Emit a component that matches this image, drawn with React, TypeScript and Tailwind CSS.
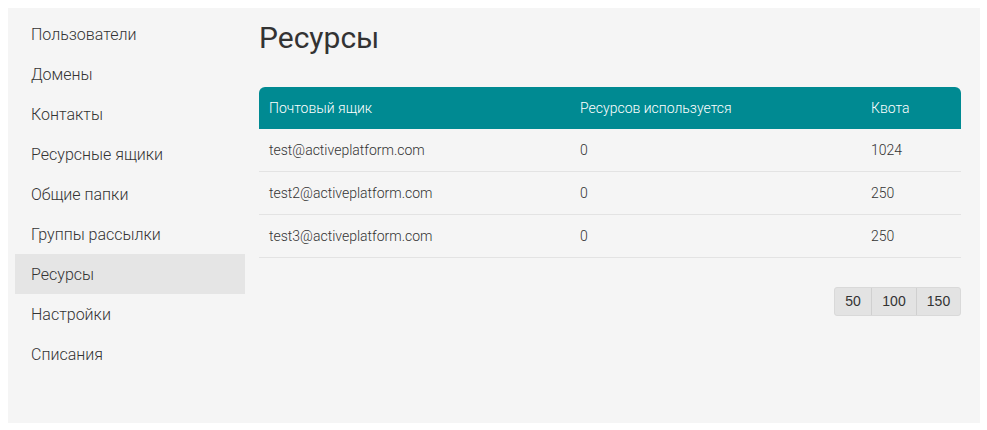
import React from 'react';

const menu = [
  'Пользователи',
  'Домены',
  'Контакты',
  'Ресурсные ящики',
  'Общие папки',
  'Группы рассылки',
  'Ресурсы',
  'Настройки',
  'Списания',
];

const rows = [
  { mail: 'test@activeplatform.com', used: '0', quota: '1024' },
  { mail: 'test2@activeplatform.com', used: '0', quota: '250' },
  { mail: 'test3@activeplatform.com', used: '0', quota: '250' },
];

export default function App() {
  return (
    <div className="h-[430px] w-[987px] bg-white p-2" style={{ fontFamily: 'Roboto, "Liberation Sans", sans-serif' }}>
      <div className="flex h-[415px] w-[972px] bg-[#f5f5f5]">
        <nav className="ml-[7px] mt-[6px] w-[230px]">
          {menu.map((item) => (
            <div
              key={item}
              className={`flex h-10 items-center pl-4 pt-[2px] text-[16px] font-light text-[#333] ${item === 'Ресурсы' ? 'bg-[#e5e5e5]' : ''}`}
            >
              {item}
            </div>
          ))}
        </nav>

        <main className="ml-[14px] w-[702px]">
          <h1 className="mt-[12px] h-[67px] text-[30px] leading-[36px] text-[#333]">Ресурсы</h1>

          <div className="flex h-[42px] items-center rounded-t-[6px] bg-[#008a92] text-[14px] font-light text-white">
            <div className="w-[311px] pl-[10px]">Почтовый ящик</div>
            <div className="w-[291px] pl-[10px]">Ресурсов используется</div>
            <div className="pl-[10px]">Квота</div>
          </div>

          {rows.map((r) => (
            <div key={r.mail} className="flex h-[43px] items-center border-b border-[#e3e3e3] text-[14px] font-light text-[#333]">
              <div className="w-[311px] pl-[10px]">{r.mail}</div>
              <div className="w-[291px] pl-[10px]">{r.used}</div>
              <div className="pl-[10px]">{r.quota}</div>
            </div>
          ))}

          <div className="mt-[29px] flex justify-end">
            <div
              className="flex h-[29px] overflow-hidden rounded-[3px] border border-[#d9d9d9] bg-[#e3e3e3] text-[14px] text-[#333]"
              style={{ fontFamily: '"Liberation Sans", Arial, sans-serif' }}
            >
              <div className="flex w-[36px] items-center justify-center">50</div>
              <div className="flex w-[45px] items-center justify-center border-l border-[#d0d0d0]">100</div>
              <div className="flex w-[44px] items-center justify-center border-l border-[#d0d0d0]">150</div>
            </div>
          </div>
        </main>
      </div>
    </div>
  );
}
